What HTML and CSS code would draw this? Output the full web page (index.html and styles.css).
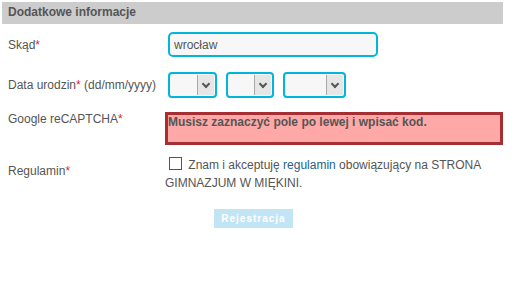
FILE: index.html
```html
<!DOCTYPE html>
<html lang="pl">
<head>
    <meta charset="UTF-8">
    <title>Rejestracja</title>
    <link rel="stylesheet" href="styles.css">
</head>
<body>
    <div class="form-box">
        <div class="section-title">Dodatkowe informacje</div>

        <div class="row row-city">
            <label class="label">Skąd<span class="req">*</span></label>
            <div class="field">
                <input class="text-input" type="text" value="wrocław">
            </div>
        </div>

        <div class="row row-date">
            <label class="label">Data urodzin<span class="req">*</span> (dd/mm/yyyy)</label>
            <div class="field selects">
                <div class="select s-day"><span class="arrow"></span></div>
                <div class="select s-month"><span class="arrow"></span></div>
                <div class="select s-year"><span class="arrow"></span></div>
            </div>
        </div>

        <div class="row row-captcha">
            <label class="label">Google reCAPTCHA<span class="req">*</span></label>
            <div class="field">
                <div class="captcha-error">Musisz zaznaczyć pole po lewej i wpisać kod.</div>
            </div>
        </div>

        <div class="row row-rules">
            <label class="label">Regulamin<span class="req">*</span></label>
            <div class="field rules-text">
                <span class="checkbox"></span>
                Znam i akceptuję <a href="#">regulamin</a> obowiązujący na STRONA GIMNAZJUM W MIĘKINI.
            </div>
        </div>

        <div class="submit-row">
            <button class="submit-btn">Rejestracja</button>
        </div>
    </div>
</body>
</html>
```

FILE: styles.css
```css
body {
    margin: 0;
    padding: 0;
    background: #fff;
    font-family: "Liberation Sans", Arial, sans-serif;
    font-size: 12px;
    color: #555;
}
.form-box {
    width: 501px;
    margin: 2px;
}
.section-title {
    background: #cccccc;
    color: #555;
    font-weight: bold;
    font-size: 12px;
    height: 22px;
    line-height: 21px;
    padding-left: 6px;
}
.row {
    display: grid;
    grid-template-columns: 163px 1fr;
}
.label {
    padding-left: 6px;
    font-size: 12px;
}
.req {
    color: #e0262b;
}
.row-city {
    margin-top: 8px;
    align-items: center;
}
.text-input {
    display: block;
    box-sizing: border-box;
    width: 210px;
    height: 25px;
    margin-left: 3px;
    border: 2px solid #00b6d9;
    border-radius: 5px;
    background: #f7f7f7;
    font-family: "Liberation Sans", Arial, sans-serif;
    font-size: 12px;
    color: #555;
    padding: 0 4px;
    outline: none;
}
.row-date {
    margin-top: 15px;
    align-items: center;
}
.selects {
    display: flex;
    gap: 9px;
    margin-left: 3px;
}
.select {
    box-sizing: border-box;
    height: 26px;
    border: 2px solid #00b6d9;
    border-radius: 4px;
    background: #f7f7f7;
    display: flex;
    justify-content: flex-end;
}
.s-day { width: 49px; }
.s-month { width: 48px; }
.s-year { width: 63px; }
.arrow {
    width: 16px;
    height: 20px;
    margin: 1px 1px 1px 0;
    background: #e6e6e6;
    border-left: 1px solid #a9a9a9;
    position: relative;
}
.arrow::after {
    content: "";
    position: absolute;
    left: 5px;
    top: 6px;
    width: 4px;
    height: 4px;
    border-right: 2px solid #555;
    border-bottom: 2px solid #555;
    transform: rotate(45deg);
}
.row-captcha {
    margin-top: 14px;
    align-items: start;
}
.captcha-error {
    box-sizing: border-box;
    height: 33px;
    border: 3px solid #a52f33;
    background: #ffa8a8;
    font-weight: bold;
    font-size: 12px;
    color: #555;
    padding: 0;
    line-height: 14px;
}
.row-rules {
    margin-top: 11px;
    align-items: start;
}
.row-rules .label {
    padding-top: 8px;
}
.rules-text {
    font-size: 12px;
    line-height: 18px;
    padding-right: 12px;
}
.checkbox {
    display: inline-block;
    width: 11px;
    height: 11px;
    border: 1px solid #555;
    margin: 0 3px 0 4px;
    vertical-align: -1px;
}
.rules-text a {
    color: #1d5f8e;
    text-decoration: none;
}
.submit-row {
    padding-left: 212px;
    margin-top: 17px;
}
.submit-btn {
    background: #c2e5f5;
    border: none;
    color: #fff;
    font-family: "Liberation Sans", Arial, sans-serif;
    font-weight: bold;
    font-size: 10px;
    letter-spacing: 1px;
    width: 79px;
    height: 19px;
    padding: 0;
}
```
